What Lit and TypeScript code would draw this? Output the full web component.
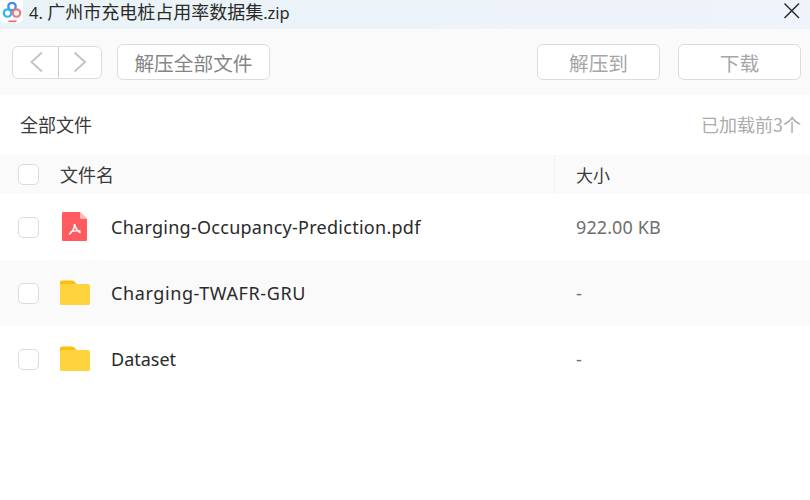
import { LitElement, html, css } from "lit";
import { customElement } from "lit/decorators.js";

const folder = html`<svg class="ficon" width="32" height="26" viewBox="0 0 32 26">
  <path d="M0 5V2.500A2 2 0 0 1 2 .5h10c1.500 0 2.500.8 3.400 2L17 5z" fill="#fbbf0e"/>
  <path d="M0 6a2 2 0 0 1 2-2h12l2 0h12a2 2 0 0 1 2 2v17.500a1.500 1.500 0 0 1-1.500 1.500h-27A1.500 1.500 0 0 1 0 23.500z" fill="#ffd33d"/>
</svg>`;

const pdf = html`<svg class="ficon" width="32" height="30" viewBox="0 0 32 30">
  <path d="M3 0h17l7 7v21a1 1 0 0 1-1 1H3a1 1 0 0 1-1-1V1a1 1 0 0 1 1-1z" fill="#ff5a5f"/>
  <path d="M20 0l7 7h-6a1 1 0 0 1-1-1z" fill="#ffb7b9"/>
  <path d="M14.500 12c.8 3.800 2.800 7 6 8.800M14.500 12.500c0 3.800-2.300 7.500-5.500 9.800M10.500 19.800c3-1 6.500-1.300 10-.8" fill="none" stroke="#fff" stroke-width="1.500"/>
</svg>`;

const rows = [
  { name: "Charging-Occupancy-Prediction.pdf", size: "922.00 KB", icon: pdf, alt: false, track: 0.27 },
  { name: "Charging-TWAFR-GRU", size: "-", icon: folder, alt: true, track: 0.6 },
  { name: "Dataset", size: "-", icon: folder, alt: false, track: 0 },
];

@customElement("app-root")
export class AppRoot extends LitElement {
  static styles = css`
    :host { display: block; width: 810px; height: 500px; background: #fff; overflow: hidden;
      font-family: "Noto Sans", "Noto Sans CJK SC", sans-serif; color: #222; }
    .title { height: 29px; display: flex; align-items: flex-start; background: linear-gradient(90deg, #e9f3f7, #eff3fa); }
    .logo { width: 23px; height: 23px; flex: none; margin: 0 6px 0 0; background: #fff; border-radius: 0 0 5px 5px; display: flex; justify-content: center; }
    .title-text { flex: 1; font-family: "Noto Sans CJK SC", sans-serif; font-size: 18px; color: #2a2a2a; white-space: nowrap; line-height: 22px; }
    .latin { font-family: "Noto Sans", sans-serif; font-size: 16.500px; }
    .close { flex: none; margin: 2px 9px 0 0; display: block; }
    .toolbar { height: 66px; background: #fafafa; display: flex; align-items: center; padding: 0 9px 0 12px; box-sizing: border-box; gap: 15px; }
    .nav { width: 90px; height: 33px; box-sizing: border-box; border: 1px solid #dcdcdc; border-radius: 6px; background: #fff; display: flex; }
    .nav span { display: flex; align-items: center; justify-content: center; }
    .nav span:first-child { width: 45px; }
    .nav span + span { flex: 1; border-left: 1px solid #cfcfcf; }
    .btn { height: 36px; box-sizing: border-box; border: 1px solid #dcdcdc; border-radius: 6px; background: #fff; color: #858585; font-size: 19.700px; display: flex; align-items: center; justify-content: center; font-family: "Noto Sans CJK SC", sans-serif; }
    .b1 { width: 153px; }
    .b2 { width: 123px; color: #a6a6a6; margin-left: auto; }
    .b3 { width: 123px; color: #a6a6a6; margin-left: 3px; }
    .crumb { height: 60px; display: flex; align-items: center; justify-content: space-between; padding: 0 9px 2px 20px; box-sizing: border-box; font-family: "Noto Sans CJK SC", sans-serif; font-size: 18px; color: #3a3a3a; }
    .loaded { color: #acacac; }
    .head, .row { display: grid; grid-template-columns: 60px 494px 1fr; align-items: center; }
    .head { height: 39px; background: #fafafa; font-family: "Noto Sans CJK SC", sans-serif; font-size: 18px; color: #3a3a3a; }
    .head > div:nth-child(2) { padding-bottom: 2px; }
    .size-h { height: 100%; display: flex; align-items: center; border-left: 1px solid #f0f0f0; padding: 0 0 1px 21px; box-sizing: border-box; font-size: 17px; }
    .cell { display: flex; align-items: center; padding-left: 18px; }
    .check { width: 21px; height: 21px; box-sizing: border-box; border: 1px solid #dcdcdc; border-radius: 5px; background: #fff; }
    .row { height: 66px; font-size: 18px; }
    .row.alt { background: #fafafa; }
    .name { display: flex; align-items: center; color: #2a2a2a; }
    .ficon { flex: none; margin-right: 19px; display: block; }
    .size { padding-left: 22px; color: #6e6e6e; letter-spacing: .1px; }
  `;

  render() {
    return html`
      <div class="title">
        <div class="logo">
          <svg width="20" height="23" viewBox="0 0 20 23">
            <circle cx="10" cy="6.500" r="3.700" fill="none" stroke="#3f8fe8" stroke-width="2.300"/>
            <circle cx="5.500" cy="13" r="3.700" fill="none" stroke="#36b4ea" stroke-width="2.300"/>
            <circle cx="14.500" cy="13" r="3.700" fill="none" stroke="#f2787c" stroke-width="2.300"/>
            <rect x="6.500" y="20.500" width="8" height="1.600" fill="#ee5f7e"/>
          </svg>
        </div>
        <div class="title-text"><span class="latin">4. </span>广州市充电桩占用率数据集<span class="latin">.zip</span></div>
        <svg class="close" width="18" height="18" viewBox="0 0 18 18"><path d="M1.500 1.500l14.500 14.500M16 1.500L1.500 16" stroke="#222" stroke-width="1.400" fill="none"/></svg>
      </div>
      <div class="toolbar">
        <div class="nav">
          <span><svg width="14" height="22" viewBox="0 0 14 22"><path d="M13 1.500L2.500 11 13 20.500" fill="none" stroke="#c4c4c4" stroke-width="2"/></svg></span>
          <span><svg width="14" height="22" viewBox="0 0 14 22"><path d="M1.500 1.500L12 11 1.500 20.500" fill="none" stroke="#c4c4c4" stroke-width="2"/></svg></span>
        </div>
        <div class="btn b1">解压全部文件</div>
        <div class="btn b2">解压到</div>
        <div class="btn b3">下载</div>
      </div>
      <div class="crumb"><span>全部文件</span><span class="loaded">已加载前3个</span></div>
      <div class="head">
        <div class="cell"><div class="check"></div></div>
        <div>文件名</div>
        <div class="size-h">大小</div>
      </div>
      ${rows.map(r => html`
        <div class="row ${r.alt ? "alt" : ""}">
          <div class="cell"><div class="check"></div></div>
          <div class="name" style="letter-spacing:${r.track}px">${r.icon}${r.name}</div>
          <div class="size">${r.size}</div>
        </div>`)}
    `;
  }
}
